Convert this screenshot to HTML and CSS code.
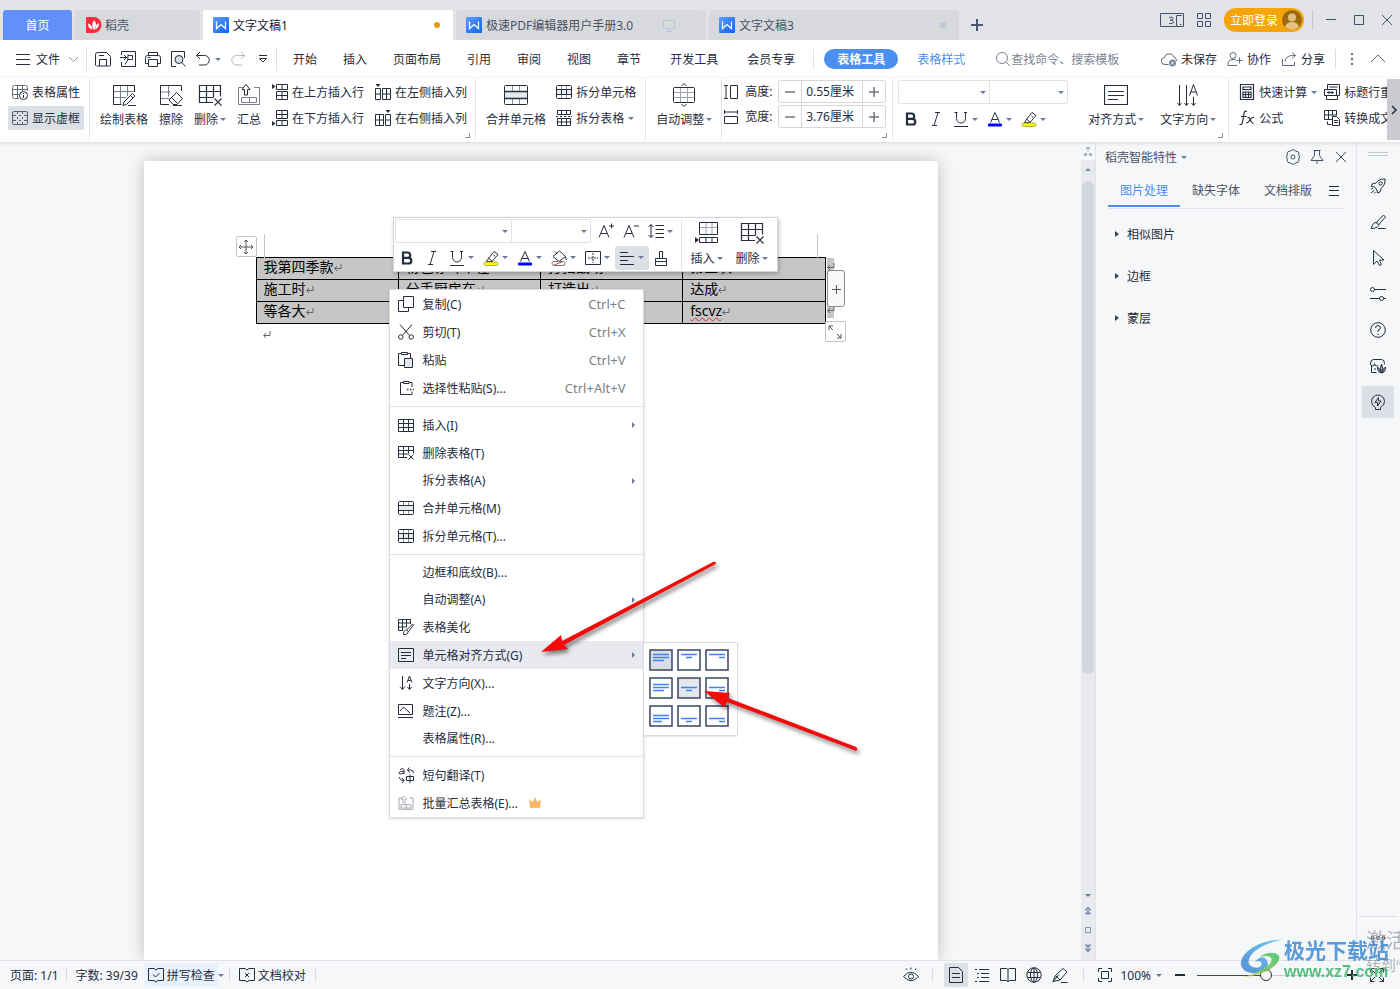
FILE: index.html
```html
<!DOCTYPE html>
<html lang="zh-CN">
<head>
<meta charset="utf-8">
<title>文字文稿1</title>
<link rel="stylesheet" href="styles.css">
</head>
<body>
<svg class="sprite" aria-hidden="true">
  <defs>
    <linearGradient id="wg" x1="0" y1="0" x2="1" y2="1"><stop offset="0" stop-color="#5e9bff"/><stop offset="1" stop-color="#0a66e8"/></linearGradient>
    <linearGradient id="lb" x1="1" y1="0" x2="0" y2="1"><stop offset="0" stop-color="#4fc3f7"/><stop offset="1" stop-color="#3f7fce"/></linearGradient>
    <linearGradient id="lg" x1="1" y1="0" x2="0" y2="1"><stop offset="0" stop-color="#3fbf6a"/><stop offset=".6" stop-color="#7cc653"/><stop offset="1" stop-color="#f2d24a"/></linearGradient>
  </defs>
  <symbol id="w" viewBox="0 0 16 16"><rect width="16" height="16" rx="1" fill="url(#wg)" stroke="none"/><path d="M3.500 4.500v7l4.500-4 4.500 4v-7" stroke="#fff" stroke-width="1.300"/></symbol>
  <symbol id="daoke" viewBox="0 0 16 16"><path d="M1 0h6.500a8 8 0 0 1 0 16H1q-1 0-1-1V1q0-1 1-1z" fill="#fb2c3c" stroke="none"/><path d="M8 3q4 5 0 10q-3.500-4 0-10zM2 6.500q4 1 4 6q-4-1-4-6zM13 6q-4 1.500-4.500 6.500q4.500-1 4.500-6.500z" fill="#fff" stroke="none"/></symbol>
  <symbol id="monitor" viewBox="0 0 16 16"><path d="M2.500 3.500h11v8h-11zM8 11.500v3M5 14.500h6"/></symbol>
  <symbol id="plus" viewBox="0 0 12 12"><path d="M6 0v12M0 6h12" stroke-width="2"/></symbol>
  <symbol id="burger" viewBox="0 0 16 16"><path d="M1 3.500h14M1 8.500h14M1 13.500h14"/></symbol>
  <symbol id="chev" viewBox="0 0 16 16"><path d="M4 6l4.500 4.500L13 6"/></symbol>
  <symbol id="save" viewBox="0 0 16 16"><path d="M.500 14.500V3.500q0-2 2-2h9l4 4v9q0 .500-1 .500H1.500M4.500 15V8.500h7V15M4 4.500h5"/></symbol>
  <symbol id="pdf" viewBox="0 0 16 16"><path d="M1.500 4V.500h14v15h-14V11M0 6.500h6.500M4 4l2.500 2.500L4 9M5 13.500q4-4 3-10M8 4.500h4.500v4H8"/></symbol>
  <symbol id="print" viewBox="0 0 16 16"><path d="M3.500 4.500v-3h9v3M3.500 12.500h-3v-6q0-2 2-2h11q2 0 2 2v6h-3M3.500 8.500h9v7h-9zM2.500 6.500h3"/></symbol>
  <symbol id="preview" viewBox="0 0 16 16"><path d="M6 15.500H1.500V.500h13V7"/><circle cx="9" cy="8.500" r="4" fill="#d9dce2"/><path d="M12 11.500l3.500 4"/></symbol>
  <symbol id="undo" viewBox="0 0 16 16"><path d="M5 1L1.500 4.500 5 8M1.500 4.500h8a4.700 4.700 0 0 1 0 9.500H4"/></symbol>
  <symbol id="redo" viewBox="0 0 16 16"><path d="M11 1l3.500 3.500L11 8M14.500 4.500h-8a4.700 4.700 0 0 0 0 9.500H12"/></symbol>
  <symbol id="more" viewBox="0 0 10 10"><path d="M1 1.500h8M1.500 4.500L5 8l3.500-3.500z"/></symbol>
  <symbol id="search" viewBox="0 0 16 16"><circle cx="7" cy="7" r="5.500"/><path d="M11 11l4 4"/></symbol>
  <symbol id="cloud" viewBox="0 0 16 16"><path d="M7.500 13.500H4a3.500 3.500 0 0 1-.500-7 5 5 0 0 1 9.500-.500 4 4 0 0 1 2.500 4"/><circle cx="11.500" cy="12" r="3.500" fill="#77839e" stroke="none"/><path d="M10 10.500l3 3M13 10.500l-3 3" stroke="#fff"/></symbol>
  <symbol id="collab" viewBox="0 0 16 16"><circle cx="6" cy="4.500" r="3"/><path d="M1 14.500q-.500-6 5-6 2 0 3 .500M1 14.500h9M12.500 6.500v6M9.500 9.500h6"/></symbol>
  <symbol id="share" viewBox="0 0 16 16"><path d="M1.500 8v6.500h12V11M4 10.500q1-6 7.500-6h3M11 1.500l3.500 3-3.500 3"/></symbol>
  <symbol id="tblprop" viewBox="0 0 16 16"><path d="M15.500 7V3.500q0-2-2-2h-11q-2 0-2 2v9q0 2 2 2H7M.500 5.500h15M.500 10.500h7M5.500 1.500v13M10.500 1.500V7" stroke="#636a7a"/><circle cx="11.500" cy="11.500" r="4" fill="#fff"/><path d="M11.500 11v3M11.500 9v1"/></symbol>
  <symbol id="tblframe" viewBox="0 0 16 16"><g stroke="#59606f"><rect x=".500" y="1.500" width="15" height="13" rx="1.500"/><path d="M1 5.500h3m3 0h2m3 0h3M1 10.500h3m3 0h2m3 0h3M5.500 2v2m0 3v2m0 3v2M10.500 2v2m0 3v2m0 3v2"/></g></symbol>
  <symbol id="draw" viewBox="0 0 24 24"><path d="M10 21.500H1.500v-19h21V9M1.500 8.500h20M1.500 14.500h13M8.500 2.500v19M15.500 2.500V13" stroke="#7a8090"/><path d="M1.500 21.500v-19h21V9M1.500 21.500H9M12 19l8.500-8.500 2.500 2.500-8.500 8.500-3.500 1zM18.500 12.500l2.500 2.500M16 22.500h8" /></symbol>
  <symbol id="erase" viewBox="0 0 24 24"><path d="M1.500 15.500h9M9.500 2.500v11M1.500 9h10" stroke="#7a8090"/><path d="M10 21.500H1.500v-19h21V8M10 17l7.500-7.500 6 6-5.500 6h-4zM12.500 14.500l6 6M14 22.500h9"/></symbol>
  <symbol id="del" viewBox="0 0 24 24"><path d="M15 19.500H1.500v-17h21v11M1.500 8.500h21M1.500 14.500h14M8.500 2.500v17M15.500 2.500v12M16.500 15.500l7 7M23.500 15.500l-7 7" stroke-width="1.200"/></symbol>
  <symbol id="sum" viewBox="0 0 24 24"><path d="M7 4.500H1.500v17h21v-17H17M4.500 14.500h15v5h-15zM12.500 14.500v5" stroke="#7a8090"/><path d="M7.500 12V6.500H5l4-5 4 5h-2.500V12z"/></symbol>
  <symbol id="rowup" viewBox="0 0 16 16"><path d="M0 0l3.500 2.500L0 5z" fill="currentColor" stroke="none"/><path d="M4.500 .500h11v5h-11zM10 .500v5M4.500 7.500h11v8h-11zM4.500 11.500h11M10 7.500v8"/></symbol>
  <symbol id="rowdn" viewBox="0 0 16 16"><path d="M0 11l3.500 2.500L0 16z" fill="currentColor" stroke="none"/><path d="M4.500 10.500h11v5h-11zM10 10.500v5M4.500 .500h11v8h-11zM4.500 4.500h11M10 .500v8"/></symbol>
  <symbol id="colL" viewBox="0 0 16 16"><path d="M.500 0h5L3 3z" fill="currentColor" stroke="none"/><path d="M.500 4.500h5v11h-5zM.500 10h5M7.500 4.500h8v11h-8zM11.500 4.500v11M7.500 10h8"/></symbol>
  <symbol id="colR" viewBox="0 0 16 16"><path d="M10.500 0h5L13 3z" fill="currentColor" stroke="none"/><path d="M10.500 4.500h5v11h-5zM10.500 10h5M.500 4.500h8v11h-8zM4.500 4.500v11M.500 10h8"/></symbol>
  <symbol id="merge" viewBox="0 0 24 24"><path d="M.500 8.500h23v7H.500z" fill="#e6e8ec" stroke="none"/><path d="M8.500 2.500v5M15.500 2.500v5M8.500 16v5M15.500 16v5" stroke="#8b909c"/><rect x=".500" y="2.500" width="23" height="19" rx="1"/><path d="M.500 8.500h23M.500 15.500h23" stroke-width="1.300"/></symbol>
  <symbol id="merge16" viewBox="0 0 16 16"><path d="M5.500 1.500v4M10.500 1.500v4M5.500 10.500v4M10.500 10.500v4" stroke="#8b909c"/><path d="M.500 5.500h15v5H.500z" fill="#e6e8ec"/><rect x=".500" y="1.500" width="15" height="13" rx="1"/></symbol>
  <symbol id="split16" viewBox="0 0 16 16"><path d="M5.500 1.500v4M10.500 1.500v4M5.500 10.500v4M10.500 10.500v4" stroke="#8b909c"/><path d="M.500 5.500h15v5H.500z" fill="#e6e8ec"/><path d="M5.500 5.500v5M10.500 5.500v5"/><rect x=".500" y="1.500" width="15" height="13" rx="1"/></symbol>
  <symbol id="splittbl" viewBox="0 0 16 16"><path d="M1.500 4.500v-4h13v4zM5.500 .500v4M10.500 .500v4M0 6.500h2m2 0h2m2 0h2m2 0h2m1 0h1M1.500 8.500h13v7h-13zM1.500 12h13M5.500 8.500v7M10.500 8.500v7"/></symbol>
  <symbol id="autofit" viewBox="0 0 24 24"><path d="M1.500 9.500h21M1.500 14.500h21M8.500 4.500v15M15.500 4.500v15" stroke="#a0a4ae"/><rect x="1.500" y="4.500" width="21" height="15" rx="1"/><path d="M9.500 3L12 .500 14.500 3M9.500 21l2.500 2.500 2.500-2.500"/></symbol>
  <symbol id="hgt" viewBox="0 0 16 16"><path d="M0 1.500h4M0 14.500h4M2 1.500v13M6.500 1.500h7v13h-7z"/></symbol>
  <symbol id="wid" viewBox="0 0 16 16"><path d="M.500 1v4M13.500 1v4M.500 3h13M.500 7.500h13v7H.500z"/></symbol>
  <symbol id="bold" viewBox="0 0 16 16"><path d="M4 2.500h4.500a2.700 2.700 0 0 1 0 5.400H4zM4 7.900h5.500a2.800 2.800 0 0 1 0 5.600H4z" stroke-width="2.200"/></symbol>
  <symbol id="ital" viewBox="0 0 16 16"><path d="M7 1.500h5M4 14.500h5M10 1.500l-4 13"/></symbol>
  <symbol id="undl" viewBox="0 0 16 16"><path d="M3.500 1v6.500a4.500 4.500 0 0 0 9 0V1M1.500 1.500h3M11 1.500h3M1 15.500h14"/></symbol>
  <symbol id="fcol" viewBox="0 0 16 16"><path d="M3.500 11.500L8 1.500l4.500 10M5 8.500h6"/><rect x="1" y="12.500" width="14" height="3" rx="1" fill="#00f" stroke="none"/></symbol>
  <symbol id="hili" viewBox="0 0 16 16"><path d="M5 9l6-7.500 4 3L9 11.500H3.500zM5.500 8l4 3.500M10.500 5l1.500 1.200"/><rect x="1" y="12" width="14" height="3.500" rx="1.700" fill="#ff0" stroke="#8c8a3a" stroke-width=".700"/></symbol>
  <symbol id="shade" viewBox="0 0 16 16"><path d="M2 6.500L8.500 1l6 5.500L8 11.500zM6 3.500l-2-2M14.500 7l1 3"/><rect x="1" y="11.500" width="13" height="4" rx="2" fill="#fff" stroke="#777"/><path d="M3 15l8-3" stroke="#e04040"/></symbol>
  <symbol id="bord" viewBox="0 0 16 16"><path d="M.500 1.500h15v13H.500z"/><path d="M8 3v10M3 8h10" stroke-dasharray="2 1"/></symbol>
  <symbol id="align" viewBox="0 0 16 16"><path d="M1 2.500h8M1 6.500h14M1 10.500h8M1 14.500h14"/></symbol>
  <symbol id="brush" viewBox="0 0 16 16"><path d="M6.500 8.500v-7h3v7M2.500 11.500v-3h11v3M2.500 11.500h11v4h-11z"/></symbol>
  <symbol id="Aup" viewBox="0 0 16 16"><path d="M1 14.500L6 2.500l5 12M3 10.500h6M11 3h5M13.500 .500v5"/></symbol>
  <symbol id="Adn" viewBox="0 0 16 16"><path d="M1 14.500L6 2.500l5 12M3 10.500h6M11 3h5"/></symbol>
  <symbol id="lsp" viewBox="0 0 16 16"><path d="M3 1.500v13M.500 4L3 1.500 5.500 4M.500 12L3 14.500 5.500 12M7.500 2.500H16M7.500 6.500H16M7.500 10.500H16M7.500 14.500H16"/></symbol>
  <symbol id="insrow" viewBox="0 0 24 24"><path d="M4.500 6.500h18M11 1.500v12M17 1.500v12" stroke="#a0a4ae"/><path d="M4.500 13.500v-12h18v12zM4.500 16.500h18v5h-18zM11 16.500v5M17 16.500v5"/><path d="M0 16l4 3-4 3z" fill="currentColor" stroke="none"/></symbol>
  <symbol id="alignbox" viewBox="0 0 24 24"><path d="M.500 2.500h23v19H.500zM4 8.500h16M4 12.500h16M4 16.500h10" stroke-width="1.200"/></symbol>
  <symbol id="alignbox16" viewBox="0 0 16 16"><path d="M.500 1.500h15v13H.500zM3 5.500h10M3 8.500h10M3 11.500h5"/></symbol>
  <symbol id="dir" viewBox="0 0 24 24"><path d="M3.500 2v20M10.500 2v20M17.500 14v8M1.500 20l2 2.500 2-2.500M8.500 20l2 2.500 2-2.500M15.500 20l2 2.500 2-2.500M13.500 12.500l4-11 4 11M15 9h5"/></symbol>
  <symbol id="dir16" viewBox="0 0 16 16"><path d="M4.500 1v13M2 11.500l2.500 3 2.500-3M11.500 9v5M9.500 12l2 2.500 2-2.500M9 7.500l2.500-6.500L14 7.500M10 5.500h3"/></symbol>
  <symbol id="calc" viewBox="0 0 16 16"><path d="M1.500 .500h13v15h-13zM4 3h8v2.500H4zM4 8h8v5.500H4zM6.500 8v5.500M9.500 8v5.500M4 10.500h8" stroke-width="1.200"/></symbol>
  <symbol id="fx" viewBox="0 0 16 16"><path d="M8 1.500q-2.500-1.500-3 2L3.500 12q-.500 3-3 2.500M2 6.500h5.500M8.500 7.500q1.500-1 2.500 2t3.500 4M15 7q-2 0-4 3t-4 3" stroke-width="1.200"/></symbol>
  <symbol id="title" viewBox="0 0 16 16"><path d="M3.500 5V.500h12v11h-3M5.500 3h8M.500 5.500h12v6H.500zM3 8.500h7M5 7v3M8 7v3M2.500 11.500v4h11v-4"/></symbol>
  <symbol id="conv" viewBox="0 0 16 16"><path d="M8.500 9.500H.500v-9h12v5M.500 5h12M4.500 .500v9M8.500 .500v5M8.500 6.500h4l3 3v6h-7zM10 10.500h4M10 12.500h4M3.500 11.500v3h4"/></symbol>
  <symbol id="copy" viewBox="0 0 16 16"><path d="M5.500 .500h10v11h-10zM5.500 4.500h-5v11h10v-4"/></symbol>
  <symbol id="cut" viewBox="0 0 16 16"><path d="M2 .500l9.500 11M14 .500l-9.500 11"/><circle cx="2.800" cy="13" r="2.200"/><circle cx="13.200" cy="13" r="2.200"/></symbol>
  <symbol id="paste" viewBox="0 0 16 16"><path d="M6 13.500H.500v-12h3M9 1.500h3.500V6M3.500 .500h6v2h-6z"/><path d="M6.500 6.500h8v9h-8z" fill="#e6e8ec"/></symbol>
  <symbol id="pastes" viewBox="0 0 16 16"><path d="M5.500 2.500h-3v12h11.500v-3M11 2.500h3V7M5.500 1.500h5.500v2H5.500z"/><path d="M9 9.500h1.500m1.500 0h1.500m1.500 0H16" stroke-width="1.500"/></symbol>
  <symbol id="tbl16" viewBox="0 0 16 16"><path d="M.500 2.500h15v12H.500zM.500 6.500h15M.500 10.500h15M5.500 2.500v12M10.500 2.500v12"/></symbol>
  <symbol id="del16" viewBox="0 0 16 16"><path d="M9 12.500H.500v-11h15v7M.500 5.500h15M.500 9h10M5.500 1.500v11M10.500 1.500v7M10.500 9.500l5 5M15.500 9.500l-5 5"/></symbol>
  <symbol id="beauty" viewBox="0 0 16 16"><path d="M5 11.500H.500v-11h12V5M.500 4h12M.500 8h8M4.500 .500v11M8.500 .500V8M8.500 11l6-6 1 1-5 6.500"/><path d="M5.500 15.500q0-4.500 3-4.500 3 1 1 3.500-1.500 1.500-4 1z"/></symbol>
  <symbol id="caption" viewBox="0 0 16 16"><path d="M.500 1.500h14v10H.500zM0 14.500h15M2 8l3.500-4L12 10"/></symbol>
  <symbol id="trans" viewBox="0 0 16 16"><path d="M2 2.500q4-2 4 1V7M6 4.500q-5-.500-5 1.500t5 0M9.500 3h3q3 0 3 3M11.500 .500L9.500 3l2 2.500M1.500 10q0 3.500 4.500 3.500M4 11l2 2.500-2 2.500M8.500 9.500h7v4h-7zM12 7.500V16"/></symbol>
  <symbol id="crown" viewBox="0 0 16 16"><path d="M2 4l3.500 3L8 2l2.500 5L14 4l-1 9H3z" fill="#fdb968" stroke="none"/></symbol>
  <symbol id="gear" viewBox="0 0 16 16"><path d="M6.200 1.500Q8-.300 9.800 1.500l1.200.700q2.600-.200 3 2.300l-.400 1.500q2 2 0 4l.400 1.500q-.400 2.500-3 2.300l-1.200.700Q8 16.300 6.200 14.500L5 13.800q-2.600.200-3-2.300L2.400 10q-2-2 0-4L2 4.500q.400-2.500 3-2.300z" stroke-linejoin="round"/><circle cx="8" cy="8" r="2"/></symbol>
  <symbol id="pin" viewBox="0 0 16 16"><path d="M4.500 1.500h7M5.500 1.500v5L2 11.500h12l-3.500-5v-5M8 11.500V15"/></symbol>
  <symbol id="x" viewBox="0 0 16 16"><path d="M3 3l10 10M13 3L3 13"/></symbol>
  <symbol id="rocket" viewBox="0 0 16 16"><path d="M15 1q-6-.500-9 4L2 6 1.500 8.500l3 .500L7 12l.500 3 2.500-1 1-3.500q4.500-3.500 4-9.500zM1 11.500l2-1.500M1 15l3.500-3M4 15.500l1.500-1.500"/><circle cx="10.500" cy="5.500" r="1.700"/></symbol>
  <symbol id="pen" viewBox="0 0 16 16"><path d="M6 9l7.500-8 2 2-7 8M1 14.500q1.500-5 4-6 3.500 0 3.500 3-1.500 3-7.500 3zM8 14.500h7.500"/></symbol>
  <symbol id="write" viewBox="0 0 16 16"><path d="M1 14.500l2.500-6L11 1.500l4 3.500-7 8zM3.500 8.500l4.500 4.500M1 14.500l6-7M9 15.500h6.500"/></symbol>
  <symbol id="cursor" viewBox="0 0 16 16"><path d="M3.500 .500v14l3.500-3.500 2.500 4.500 2-1-2-4.500h4.500z"/></symbol>
  <symbol id="sliders" viewBox="0 0 16 16"><circle cx="2.500" cy="3.500" r="2"/><circle cx="11.500" cy="12.500" r="2"/><path d="M4.500 3.500H16M0 12.500h9.500M13.500 12.500H16"/></symbol>
  <symbol id="help" viewBox="0 0 16 16"><circle cx="8" cy="8" r="7.300"/><path d="M5.500 6q0-2.500 2.500-2.500T10.500 6Q10.500 7.500 8 8.500V10M8 11.500V13"/></symbol>
  <symbol id="shop" viewBox="0 0 16 16"><path d="M6.500 14.500h-5V8M.500 5.500q0-4 3-4h8q3 0 3 4v1M.500 5.500q0 2.500 2 2.500t2-2.500q0 2.500 2 2.500T8 7M4 11h2"/><path d="M11.500 6q2.500 4 0 9-2.500-4 0-9zM7.500 9q3 1.500 3 6-3.500-1.500-3-6zM15.500 9q-3 1.500-3 6 3.500-1.500 3-6z" fill="#aab"/></symbol>
  <symbol id="bulb" viewBox="0 0 16 16"><path d="M5.500 13.500Q1.500 11.500 1.500 7.500a6.500 6.500 0 0 1 13 0q0 4-4 6v2h-5zM8.500 3.500L5 8.500h2.500v3.500L11 7H8.500z"/></symbol>
  <symbol id="spell" viewBox="0 0 16 16"><path d="M6 1.500H.500v12H6l2 1.500 2-1.500h5.500v-12H10L8 3zM5 7.500l2.500 2.500 4-4"/></symbol>
  <symbol id="proof" viewBox="0 0 16 16"><path d="M6 1.500H.500v12H6l2 1.500 2-1.500h5.500v-12H10L8 3zM6 6l4 4M10 6l-4 4"/></symbol>
  <symbol id="eye" viewBox="0 0 16 16"><path d="M.500 9.500q7.500-8.500 15 0-7.500 8.500-15 0zM8 .500v2M3 1.500L4 3M13 1.500L12 3"/><circle cx="8" cy="9.500" r="2.500"/></symbol>
  <symbol id="doc" viewBox="0 0 16 16"><path d="M1.500 .500h9l4 4v11h-13zM4 6.500h8M4 10.500h8"/></symbol>
  <symbol id="list" viewBox="0 0 16 16"><path d="M1 2.500h2M5 2.500h10M3 6.500h2M7 6.500h8M3 10.500h2M7 10.500h8M1 14.500h2M5 14.500h10"/></symbol>
  <symbol id="book" viewBox="0 0 16 16"><path d="M8 2.500L6.500 1.500H.500v12h6L8 15l1.500-1.500h6v-12h-6zM8 2.500V14"/></symbol>
  <symbol id="globe" viewBox="0 0 16 16"><circle cx="8" cy="8" r="7.200"/><ellipse cx="8" cy="8" rx="3.500" ry="7.200"/><path d="M1.500 5.500h13M1.500 10.500h13M8 1v14"/></symbol>
  <symbol id="fit" viewBox="0 0 16 16"><path d="M1.500 5V1.500H5M11 1.500h3.500V5M14.500 11v3.500H11M5 14.500H1.500V11M4.500 4.500h7v7h-7z"/></symbol>
  <symbol id="full" viewBox="0 0 16 16"><path d="M1.500 5.500v-4h4M10.500 1.500h4v4M14.500 10.500v4h-4M5.500 14.500h-4v-4M1.500 1.500l4.500 4.500M14.500 1.500L10 6M14.500 14.500L10 10M1.500 14.500L6 10"/></symbol>
  <symbol id="ret" viewBox="0 0 8 8"><path d="M7 0v4.500H1M3 2L.700 4.500 3 7"/></symbol>
  <symbol id="move" viewBox="0 0 16 16"><path d="M8 1v14M1 8h14M6 3l2-2 2 2M6 13l2 2 2-2M3 6L1 8l2 2M13 6l2 2-2 2"/></symbol>
  <symbol id="resize" viewBox="0 0 16 16"><path d="M2 6V2h4M2 2l4 4M14 10v4h-4M14 14l-4-4"/></symbol>
</svg>

<header class="tabbar">
  <button class="tab home">首页</button>
  <button class="tab store"><svg class="i16"><use href="#daoke"/></svg>稻壳</button>
  <button class="tab file current"><svg class="i16"><use href="#w"/></svg><span class="name">文字文稿1</span><i class="dot"></i></button>
  <button class="tab file"><svg class="i16"><use href="#w"/></svg><span class="name">极速PDF编辑器用户手册3.0</span><svg class="i16 faint"><use href="#monitor"/></svg></button>
  <button class="tab file"><svg class="i16"><use href="#w"/></svg><span class="name">文字文稿3</span><i class="dot"></i></button>
  <button class="newtab" aria-label="新建"><svg class="i12"><use href="#plus"/></svg></button>
  <div class="winctl">
    <button aria-label="窗口"><svg class="i24" viewBox="0 0 24 16"><path d="M.500 1.500h23v13H.500zM21.500 4V3.500h-5v10h1M20 12.500h1.500M9 5.500q4-1.500 4 1t-3 1.500q3.500 0 3.500 2t-4.500 1.500"/></svg></button>
    <button aria-label="应用"><svg class="i16" viewBox="0 0 16 16"><path d="M1.500 1.500h5v5h-5zM9.500 1.500h5v5h-5zM1.500 9.500h5v5h-5zM9.500 9.500h5v5h-5z"/></svg></button>
    <button class="login">立即登录<svg class="avatar" viewBox="0 0 20 20"><circle cx="10" cy="10" r="10" fill="#9a6a0c"/><circle cx="10" cy="7.500" r="4" fill="#e3bf80"/><path d="M3 17q1-5 7-5t7 5q-7 6-14 0z" fill="#e3bf80"/></svg></button>
    <i class="vline"></i>
    <button aria-label="最小化"><svg class="i12" viewBox="0 0 12 12"><path d="M1 5.500h10"/></svg></button>
    <button aria-label="最大化"><svg class="i12" viewBox="0 0 12 12"><path d="M1.500 1.500h9v9h-9z"/></svg></button>
    <button aria-label="关闭"><svg class="i12" viewBox="0 0 12 12"><path d="M1 1l10 10M11 1L1 11"/></svg></button>
  </div>
</header>

<div class="menubar">
  <button class="filemenu"><svg class="i16"><use href="#burger"/></svg>文件<svg class="i16 grey"><use href="#chev"/></svg></button>
  <div class="quick">
    <button aria-label="保存"><svg class="i16"><use href="#save"/></svg></button>
    <button aria-label="输出为PDF"><svg class="i16"><use href="#pdf"/></svg></button>
    <button aria-label="打印"><svg class="i16"><use href="#print"/></svg></button>
    <button aria-label="打印预览"><svg class="i16"><use href="#preview"/></svg></button>
    <button aria-label="撤销"><svg class="i16"><use href="#undo"/></svg><i class="tri"></i></button>
    <button aria-label="恢复" class="off"><svg class="i16"><use href="#redo"/></svg></button>
    <button aria-label="更多"><svg class="i10"><use href="#more"/></svg></button>
  </div>
  <nav class="nav"><button>开始</button><button>插入</button><button>页面布局</button><button>引用</button><button>审阅</button><button>视图</button><button>章节</button></nav>
  <nav class="nav extra"><button>开发工具</button><button>会员专享</button></nav>
  <nav class="nav tools"><button class="pill">表格工具</button><button class="blue">表格样式</button></nav>
  <label class="search"><svg class="i16"><use href="#search"/></svg><input type="text" placeholder="查找命令、搜索模板" aria-label="查找命令"></label>
  <div class="account">
    <button><svg class="i16"><use href="#cloud"/></svg>未保存</button>
    <button><svg class="i16"><use href="#collab"/></svg>协作</button>
    <button><svg class="i16"><use href="#share"/></svg>分享</button>
    <i class="vline"></i>
    <button aria-label="更多"><svg class="i16" viewBox="0 0 16 16"><path d="M8 2v2M8 7v2M8 12v2" stroke-width="2"/></svg></button>
    <button aria-label="收起功能区"><svg class="i16" viewBox="0 0 16 16"><path d="M1 11l7-7 7 7"/></svg></button>
  </div>
</div>

<div class="ribbon">
  <div class="groups">
    <div class="group g1">
      <div class="stack"><button><svg class="i16"><use href="#tblprop"/></svg>表格属性</button><button class="on"><svg class="i16"><use href="#tblframe"/></svg>显示虚框</button></div>
    </div>
    <div class="group g2">
      <button class="big"><svg class="i24s"><use href="#draw"/></svg><span>绘制表格</span></button>
      <button class="big"><svg class="i24s"><use href="#erase"/></svg><span>擦除</span></button>
      <button class="big"><svg class="i24s"><use href="#del"/></svg><span>删除<i class="tri"></i></span></button>
      <button class="big"><svg class="i24s"><use href="#sum"/></svg><span>汇总</span></button>
      <div class="stack"><button><svg class="i16"><use href="#rowup"/></svg>在上方插入行</button><button><svg class="i16"><use href="#rowdn"/></svg>在下方插入行</button></div>
      <div class="stack"><button><svg class="i16"><use href="#colL"/></svg>在左侧插入列</button><button><svg class="i16"><use href="#colR"/></svg>在右侧插入列</button></div>
      <i class="corner"></i>
    </div>
    <div class="group g3">
      <button class="big"><svg class="i24s"><use href="#merge"/></svg><span>合并单元格</span></button>
      <div class="stack"><button><svg class="i16"><use href="#split16"/></svg>拆分单元格</button><button><svg class="i16"><use href="#splittbl"/></svg>拆分表格<i class="tri"></i></button></div>
    </div>
    <div class="group g3"><button class="big"><svg class="i24s"><use href="#autofit"/></svg><span>自动调整<i class="tri"></i></span></button></div>
    <div class="group g5">
      <div class="sizes">
        <div class="size"><svg class="i16"><use href="#hgt"/></svg><label for="rh">高度:</label><div class="spin"><button aria-label="减小高度"><svg class="i10" viewBox="0 0 10 10"><path d="M0 5h10" stroke-width="1.500"/></svg></button><input id="rh" type="text" value="0.55厘米"><button aria-label="增大高度"><svg class="i10" viewBox="0 0 10 10"><path d="M0 5h10M5 0v10" stroke-width="1.500"/></svg></button></div></div>
        <div class="size"><svg class="i16"><use href="#wid"/></svg><label for="cw">宽度:</label><div class="spin"><button aria-label="减小宽度"><svg class="i10" viewBox="0 0 10 10"><path d="M0 5h10" stroke-width="1.500"/></svg></button><input id="cw" type="text" value="3.76厘米"><button aria-label="增大宽度"><svg class="i10" viewBox="0 0 10 10"><path d="M0 5h10M5 0v10" stroke-width="1.500"/></svg></button></div></div>
      </div>
      <i class="corner"></i>
    </div>
    <div class="group g6">
      <div class="font">
        <div class="combos"><span class="combo wide"><select aria-label="字体"><option></option></select><i class="tri"></i></span><span class="combo"><select aria-label="字号"><option></option></select><i class="tri"></i></span></div>
        <div class="fmt"><button aria-label="加粗"><svg class="i16"><use href="#bold"/></svg></button><button aria-label="倾斜"><svg class="i16"><use href="#ital"/></svg></button><button class="dd" aria-label="下划线"><svg class="i16"><use href="#undl"/></svg><i class="tri"></i></button><button class="dd" aria-label="字体颜色"><svg class="i16"><use href="#fcol"/></svg><i class="tri"></i></button><button class="dd" aria-label="突出显示"><svg class="i16"><use href="#hili"/></svg><i class="tri"></i></button></div>
      </div>
      <button class="big"><svg class="i24s"><use href="#alignbox"/></svg><span>对齐方式<i class="tri"></i></span></button>
      <button class="big"><svg class="i24s"><use href="#dir"/></svg><span>文字方向<i class="tri"></i></span></button>
      <i class="corner"></i>
    </div>
    <div class="group g7">
      <div class="stack"><button><svg class="i16"><use href="#calc"/></svg>快速计算<i class="tri"></i></button><button><svg class="i16"><use href="#fx"/></svg>公式</button></div>
      <div class="stack"><button><svg class="i16"><use href="#title"/></svg>标题行重复</button><button><svg class="i16"><use href="#conv"/></svg>转换成文本</button></div>
    </div>
  </div>
  <button class="scrollbtn" aria-label="向右滚动"><svg class="i10" viewBox="0 0 10 10"><path d="M3 1l4 4-4 4" stroke-width="1.500"/></svg></button>
</div>

<div class="main">
  <div class="canvas">
    <article class="page">
      <table class="doc">
        <tr><td>我第四季款<svg class="ret"><use href="#ret"/></svg></td><td>粉色赤峰市在<svg class="ret"><use href="#ret"/></svg></td><td>打扫战场<svg class="ret"><use href="#ret"/></svg></td><td>第三次<svg class="ret"><use href="#ret"/></svg></td></tr>
        <tr><td>施工时<svg class="ret"><use href="#ret"/></svg></td><td>分手厨房在<svg class="ret"><use href="#ret"/></svg></td><td>打造出<svg class="ret"><use href="#ret"/></svg></td><td>达成<svg class="ret"><use href="#ret"/></svg></td></tr>
        <tr><td>等各大<svg class="ret"><use href="#ret"/></svg></td><td></td><td></td><td><span class="typo">fscvz</span><svg class="ret"><use href="#ret"/></svg></td></tr>
      </table>
      <p class="after"><svg class="ret"><use href="#ret"/></svg></p>
      <i class="crop cl"></i><i class="crop cr"></i>
      <div class="rowends"><svg class="ret"><use href="#ret"/></svg><svg class="ret"><use href="#ret"/></svg></div>
      <button class="handle move" aria-label="移动表格"><svg class="i16"><use href="#move"/></svg></button>
      <button class="handle addcol" aria-label="添加列"><svg class="i10" viewBox="0 0 10 10"><path d="M5.500 1v9M1 5.500h9"/></svg></button>
      <button class="handle resize" aria-label="调整大小"><svg class="i16"><use href="#resize"/></svg></button>

      <div class="mini">
        <div class="minileft">
          <div class="fmt top"><div class="combos"><span class="combo wide"><select aria-label="字体"><option></option></select><i class="tri"></i></span><span class="combo"><select aria-label="字号"><option></option></select><i class="tri"></i></span></div><button aria-label="增大字号"><svg class="i16"><use href="#Aup"/></svg></button><button aria-label="减小字号"><svg class="i16"><use href="#Adn"/></svg></button><button class="dd" aria-label="行距"><svg class="i16"><use href="#lsp"/></svg><i class="tri"></i></button></div>
          <div class="fmt"><button aria-label="加粗"><svg class="i16"><use href="#bold"/></svg></button><button aria-label="倾斜"><svg class="i16"><use href="#ital"/></svg></button><button class="dd" aria-label="下划线"><svg class="i16"><use href="#undl"/></svg><i class="tri"></i></button><button class="dd" aria-label="突出显示"><svg class="i16"><use href="#hili"/></svg><i class="tri"></i></button><button class="dd" aria-label="字体颜色"><svg class="i16"><use href="#fcol"/></svg><i class="tri"></i></button><button class="dd" aria-label="底纹"><svg class="i16"><use href="#shade"/></svg><i class="tri"></i></button><button class="dd" aria-label="边框"><svg class="i16"><use href="#bord"/></svg><i class="tri"></i></button><button class="dd on" aria-label="对齐"><svg class="i16"><use href="#align"/></svg><i class="tri"></i></button><button aria-label="格式刷"><svg class="i16"><use href="#brush"/></svg></button></div>
        </div>
        <div class="miniright">
          <button class="big"><svg class="i24s"><use href="#insrow"/></svg><span>插入<i class="tri"></i></span></button>
          <button class="big"><svg class="i24s"><use href="#del"/></svg><span>删除<i class="tri"></i></span></button>
        </div>
      </div>

      <div class="ctx">
        <button><svg class="i16"><use href="#copy"/></svg>复制(C)<kbd>Ctrl+C</kbd></button>
        <button><svg class="i16"><use href="#cut"/></svg>剪切(T)<kbd>Ctrl+X</kbd></button>
        <button><svg class="i16"><use href="#paste"/></svg>粘贴<kbd>Ctrl+V</kbd></button>
        <button><svg class="i16"><use href="#pastes"/></svg>选择性粘贴(S)...<kbd>Ctrl+Alt+V</kbd></button>
        <hr>
        <button class="sub"><svg class="i16"><use href="#tbl16"/></svg>插入(I)</button>
        <button><svg class="i16"><use href="#del16"/></svg>删除表格(T)</button>
        <button class="plain sub">拆分表格(A)</button>
        <button><svg class="i16"><use href="#merge16"/></svg>合并单元格(M)</button>
        <button><svg class="i16"><use href="#split16"/></svg>拆分单元格(T)...</button>
        <hr>
        <button class="plain">边框和底纹(B)...</button>
        <button class="plain sub">自动调整(A)</button>
        <button><svg class="i16"><use href="#beauty"/></svg>表格美化</button>
        <button class="hover sub"><svg class="i16"><use href="#alignbox16"/></svg>单元格对齐方式(G)</button>
        <button><svg class="i16"><use href="#dir16"/></svg>文字方向(X)...</button>
        <button><svg class="i16"><use href="#caption"/></svg>题注(Z)...</button>
        <button class="plain">表格属性(R)...</button>
        <hr>
        <button><svg class="i16"><use href="#trans"/></svg>短句翻译(T)</button>
        <button><svg class="i16 fade"><use href="#sum"/></svg>批量汇总表格(E)...<svg class="i16"><use href="#crown"/></svg></button>
      </div>

      <div class="aligns">
        <button class="on" aria-label="靠上左对齐"><svg viewBox="0 0 24 22"><path class="b" d="M1 1h22v20H1z"/><path d="M4 5.500h16M4 8.500h16M4 11.500h11"/></svg></button>
        <button aria-label="靠上居中"><svg viewBox="0 0 24 22"><path class="b" d="M1 1h22v20H1z"/><path d="M4 5.500h16M9 8.500h6"/></svg></button>
        <button aria-label="靠上右对齐"><svg viewBox="0 0 24 22"><path class="b" d="M1 1h22v20H1z"/><path d="M4 5.500h16M14 8.500h6"/></svg></button>
        <button aria-label="中部左对齐"><svg viewBox="0 0 24 22"><path class="b" d="M1 1h22v20H1z"/><path d="M4 7.500h16M4 10.500h16M4 13.500h11"/></svg></button>
        <button class="pick" aria-label="水平居中"><svg viewBox="0 0 24 22"><path class="b" d="M1 1h22v20H1z"/><path d="M4 10.500h16M9 13.500h6"/></svg></button>
        <button aria-label="中部右对齐"><svg viewBox="0 0 24 22"><path class="b" d="M1 1h22v20H1z"/><path d="M4 10.500h16M14 13.500h6"/></svg></button>
        <button aria-label="靠下左对齐"><svg viewBox="0 0 24 22"><path class="b" d="M1 1h22v20H1z"/><path d="M4 10.500h16M4 13.500h16M4 16.500h9"/></svg></button>
        <button aria-label="靠下居中"><svg viewBox="0 0 24 22"><path class="b" d="M1 1h22v20H1z"/><path d="M4 13.500h16M9 16.500h6"/></svg></button>
        <button aria-label="靠下右对齐"><svg viewBox="0 0 24 22"><path class="b" d="M1 1h22v20H1z"/><path d="M4 13.500h16M14 16.500h6"/></svg></button>
      </div>
      <svg class="arrows" viewBox="0 0 330 200">
        <g fill="#f50a0a" stroke="none"><path d="M1 92L21 75 22 81 173 2q3-1 3 1-1 2-2 2L24 85l4 4z"/><path d="M164 131l26 2-2 5 128 49q2 2 1 3-2 1-3 0L187 142l-3 5z"/></g>
      </svg>
    </article>
  </div>

  <div class="vscroll">
    <div class="ruler"><svg class="i10" viewBox="0 0 10 10"><path d="M3 0h4v2H3zM4.500 2h1v3h-1zM1 6h3v3H1zM6 6h3v3H6z" fill="#aab2c6" stroke="none"/></svg></div>
    <div class="track"><i class="tri up"></i><i class="thumb"></i><i class="tri"></i><svg class="i10" viewBox="0 0 10 10"><path d="M2 4l3-3 3 3zM2 8l3-3 3 3z" fill="currentColor"/></svg><svg class="i10" viewBox="0 0 10 10"><rect x="2.500" y="2.500" width="5" height="5"/></svg><svg class="i10" viewBox="0 0 10 10"><path d="M2 1l3 3 3-3zM2 5l3 3 3-3z" fill="currentColor"/></svg></div>
  </div>

  <aside class="panel">
    <div class="phead"><button class="ptitle">稻壳智能特性<i class="tri"></i></button><button aria-label="设置"><svg class="i16"><use href="#gear"/></svg></button><button aria-label="固定"><svg class="i16"><use href="#pin"/></svg></button><button aria-label="关闭"><svg class="i16"><use href="#x"/></svg></button></div>
    <div class="ptabs"><button class="sel">图片处理</button><button>缺失字体</button><button>文档排版</button><button class="pm" aria-label="菜单"><svg class="i12" viewBox="0 0 12 12"><path d="M1 1.500h10M1 5.500h10M1 10.500h10"/></svg></button></div>
    <div class="plist"><button>相似图片</button><button>边框</button><button>蒙层</button></div>
  </aside>

  <nav class="side">
    <i class="grip"></i>
    <button aria-label="加速"><svg class="i16"><use href="#rocket"/></svg></button>
    <button aria-label="样式"><svg class="i16"><use href="#pen"/></svg></button>
    <button aria-label="选择"><svg class="i16"><use href="#cursor"/></svg></button>
    <button aria-label="属性"><svg class="i16"><use href="#sliders"/></svg></button>
    <button aria-label="帮助"><svg class="i16"><use href="#help"/></svg></button>
    <button aria-label="素材"><svg class="i16"><use href="#shop"/></svg></button>
    <button class="on" aria-label="智能特性"><svg class="i16"><use href="#bulb"/></svg></button>
    <button class="last" aria-label="更多"><svg class="i16" viewBox="0 0 16 16"><circle cx="2.500" cy="8" r="1.500"/><circle cx="8" cy="8" r="1.500"/><circle cx="13.500" cy="8" r="1.500"/></svg></button>
  </nav>
</div>

<footer class="status">
  <span class="cell">页面: 1/1</span><i class="vline"></i><span class="cell">字数: 39/39</span>
  <button class="spell"><svg class="i16"><use href="#spell"/></svg>拼写检查</button><i class="tri"></i><i class="vline gap"></i>
  <button class="proof"><svg class="i16"><use href="#proof"/></svg>文档校对</button><i class="vline"></i>
  <div class="views">
    <button aria-label="护眼模式"><svg class="i16"><use href="#eye"/></svg></button><i class="vline"></i>
    <div class="modes"><button class="on" aria-label="页面视图"><svg class="i16"><use href="#doc"/></svg></button><button aria-label="大纲"><svg class="i16"><use href="#list"/></svg></button><button aria-label="阅读版式"><svg class="i16"><use href="#book"/></svg></button><button aria-label="Web版式"><svg class="i16"><use href="#globe"/></svg></button><button aria-label="写作模式"><svg class="i16"><use href="#write"/></svg></button></div>
    <i class="vline"></i>
    <button class="fit" aria-label="最佳显示"><svg class="i16"><use href="#fit"/></svg></button>
    <button class="pct">100%<i class="tri"></i></button>
    <button class="zb" aria-label="缩小"><svg class="i10" viewBox="0 0 10 10"><path d="M0 5h10" stroke-width="2"/></svg></button>
    <input class="zoom" type="range" min="0" max="100" value="50" aria-label="缩放">
    <button class="zb" aria-label="放大"><svg class="i10" viewBox="0 0 10 10"><path d="M0 5h10M5 0v10" stroke-width="2"/></svg></button>
    <button class="fullb" aria-label="全屏"><svg class="i16"><use href="#full"/></svg></button>
  </div>
</footer>

<div class="activate"><span>激活</span><small>转到“</small></div>
<div class="site">
  <svg viewBox="0 0 46 42"><path d="M44 1C26 0 4 10 1 24 0 32 8 36 16 36c12 0 16-10 11-15-4-3-9-1-11 3 4-2 8 0 6 4-3 4-13 2-13-4C9 14 26 4 44 1z" fill="url(#lb)" stroke="none"/><path d="M20 20c6-7 18-7 21-2 2 8-13 20-38 22 17-4 31-13 30-19-1-4-8-4-13-1z" fill="url(#lg)" stroke="none"/></svg>
  <div><b>极光下载站</b><em>www.xz7.com</em></div>
</div>
</body>
</html>
```
FILE: styles.css
```css
* { box-sizing: border-box; }
html, body { height: 100%; }
body {
  margin: 0;
  display: flex;
  flex-direction: column;
  position: relative;
  overflow: hidden;
  background: #f6f7f9;
  color: #262d3d;
  font: 12px/19px "Noto Sans", "Noto Sans CJK SC", sans-serif;
}
button, input, select {
  font: inherit;
  color: inherit;
  background: none;
  border: 0;
  padding: 0;
  margin: 0;
  outline: 0;
}
button { white-space: nowrap; display: flex; align-items: center; justify-content: center; flex: none; }
svg { fill: none; stroke: currentColor; flex: none; display: block; }
i { flex: none; }
.sprite { position: absolute; width: 0; height: 0; }
.i10 { width: 10px; height: 10px; }
.i12 { width: 12px; height: 12px; }
.i16 { width: 16px; height: 16px; }
.i24 { width: 24px; height: 16px; }
.i24s { width: 24px; height: 24px; }
.tri { border: 3px solid transparent; border-top-color: #6b7a99; border-bottom: 0; display: block; }
.tri.up { border-top: 0; border-bottom: 3px solid #7c8bab; }
.vline { width: 1px; height: 20px; background: #d9dce2; }

/* window tabs */
.tabbar { height: 40px; flex: none; display: flex; align-items: flex-end; gap: 3px; padding-left: 3px; background: #e1e3e7; color: #4a5163; }
.tab { height: 30px; border-radius: 3px 3px 0 0; background: #d8d9dd; }
.home { width: 69px; background: #6190fb; color: #fff; }
.store { width: 125px; justify-content: flex-start; padding-left: 11px; gap: 3px; }
.file { width: 250px; padding: 0 13px 0 10px; gap: 4px; }
.file .name { flex: 1; text-align: left; }
.file.current { background: #fff; color: #1c2230; }
.dot { width: 6px; height: 6px; border-radius: 50%; background: #bcc4d6; }
.current .dot { background: #e39a0c; }
.faint { color: #bcc4d6; margin-right: 16px; }
.newtab { width: 30px; height: 30px; color: #4a5672; }
.winctl { margin-left: auto; height: 40px; display: flex; align-items: center; gap: 12px; padding-right: 7px; color: #46506a; }
.login { height: 24px; border-radius: 12px; padding: 0 2px 0 6px; gap: 4px; background: #f5a50a; color: #fff; }
.avatar { width: 20px; height: 20px; stroke: none; }
.winctl .vline { margin: 0 0 0 -4px; background: #c6c9d0; }
.winctl .i12 { margin-right: 4px; }
.winctl button:last-child .i12 { margin-right: 0; }

/* menu bar */
.menubar { height: 38px; flex: none; display: flex; align-items: center; padding-left: 15px; background: #fff; }
.filemenu { gap: 5px; padding-right: 5px; border-right: 1px solid #e0e2e7; height: 24px; }
.grey { color: #8a8f9a; }
.quick { display: flex; gap: 9px; padding: 0 8px; height: 24px; border-right: 1px solid #e0e2e7; }
.quick button { gap: 4px; }
.quick .off { color: #b3b7bf; }
.quick .i10 { margin: 0 0 0 3px; }
.nav { display: flex; align-items: center; gap: 26px; padding-left: 16px; }
.nav.extra { gap: 29px; padding: 0 18px 0 29px; border-right: 1px solid #e0e2e7; height: 20px; }
.nav.tools { gap: 19px; padding-left: 10px; }
.pill { height: 20px; padding: 0 13px; border-radius: 10px; background: #4a90f2; color: #fff; font-weight: 700; }
.blue { color: #4a8ff0; }
.search { display: flex; align-items: center; padding-left: 30px; color: #7c8496; flex: 1; min-width: 0; }
.search input { width: 130px; min-width: 0; }
.search input::placeholder { color: #7c8496; opacity: 1; }
.account { display: flex; align-items: center; gap: 10px; padding-right: 14px; }
.account button { gap: 4px; }
.account .i16 { color: #5f687c; }
.account .vline { margin-right: -2px; }

/* ribbon */
.ribbon { height: 64px; flex: none; display: flex; padding: 1px 0 2px; background: #fff; position: relative; box-shadow: 0 1px 4px #00000024; }
.groups { flex: 1; min-width: 0; overflow: hidden; display: flex; padding-left: 8px; }
.group { display: flex; position: relative; flex: none; gap: 11px; border-right: 1px solid #e3e5e9; }
.g1 { padding-right: 5px; }
.g2 { padding: 0 8px 0 10px; }
.g3 { padding: 0 9px 0 10px; gap: 10px; }
.g5 { padding: 0 6px 0 2px; }
.g6 { padding: 0 12px 0 5px; gap: 16px; }
.g7 { padding-left: 10px; gap: 7px; border: 0; }
.stack { display: flex; flex-direction: column; gap: 2px; padding-top: 1px; }
.stack button { height: 24px; gap: 4px; justify-content: flex-start; }
.g1 .stack button { padding: 0 4px; }
.on { background: #dbe0e6; border-radius: 2px; }
.big { flex-direction: column; justify-content: flex-start; padding-top: 4px; gap: 3px; }
.big span { display: flex; align-items: center; gap: 2px; }
.corner { position: absolute; right: 5px; bottom: 2px; width: 5px; height: 5px; border: solid #8b93a5; border-width: 0 1px 1px 0; }
.sizes { display: flex; flex-direction: column; gap: 2px; padding-top: 1px; }
.size { display: flex; align-items: center; gap: 5px; }
.size label { width: 28px; }
.spin { display: flex; width: 108px; height: 23px; border: 1px solid #d5d7dd; border-radius: 2px; }
.spin button { width: 22px; color: #6f7480; }
.spin input { flex: 1; min-width: 0; padding-left: 4px; border: solid #d5d7dd; border-width: 0 1px; }
.font { display: flex; flex-direction: column; gap: 3px; padding: 1px 4px 0 0; width: 174px; }
.combos { display: flex; height: 24px; border: 1px solid #e0e2e7; border-radius: 2px; }
.combo { flex: 1; display: flex; align-items: center; padding-right: 3px; }
.combo.wide { flex: none; width: 91px; border-right: 1px solid #e0e2e7; }
.combo select { appearance: none; flex: 1; min-width: 0; height: 100%; }
.fmt { display: flex; align-items: center; height: 24px; }
.fmt button { width: 25px; height: 24px; }
.fmt .dd { width: 34px; gap: 3px; }
.scrollbtn { width: 13px; background: #c9cbd1; }

/* workspace */
.main { flex: 1; min-height: 0; display: flex; padding-top: 1px; }
.canvas { flex: 1; min-width: 0; overflow: hidden; padding-top: 18px; display: flex; justify-content: center; }
.page { flex: none; width: 794px; position: relative; background: #fff; padding: 96px 112px 0; box-shadow: 0 0 16px #0000003a; height: 100%; }
.doc { width: 570px; table-layout: fixed; border-collapse: collapse; background: #c6c6c6; color: #000; font: 14px/18px "Noto Sans", "Noto Sans CJK SC", sans-serif; }
.doc td { border: 1px solid #000; padding: 0 7px; height: 22px; white-space: nowrap; vertical-align: top; }
.ret { width: 8px; height: 8px; display: inline-block; color: #666; }
.typo { text-decoration: underline wavy #c33 1px; text-underline-offset: 1px; }
.after { margin: 1px 0 0 7px; line-height: 20px; }
.crop { position: absolute; top: 73px; width: 1px; height: 24px; background: #c4c4c4; }
.cl { left: 120px; }
.cr { left: 673px; }
.rowends { position: absolute; left: 683px; top: 97px; width: 7px; height: 60px; background: #c6c6c6; display: flex; flex-direction: column; justify-content: space-between; padding: 5px 0 4px; }
.handle { position: absolute; background: #fff; border: 1px solid #c4c4c4; border-radius: 2px; color: #555; }
.move { left: 92px; top: 75px; width: 21px; height: 21px; }
.addcol { left: 683px; top: 109px; width: 18px; height: 37px; border-color: #8c8c8c; border-radius: 3px; background: #f8f8f8; }
.resize { left: 681px; top: 160px; width: 21px; height: 21px; }

.mini { position: absolute; left: 249px; top: 56px; width: 385px; height: 55px; display: flex; padding: 1px; background: #fff; border: 1px solid #d3d6dc; box-shadow: 1px 2px 4px #00000040; }
.minileft { width: 287px; border-right: 1px solid #e3e5e9; display: flex; flex-direction: column; gap: 2px; }
.mini .combos { width: 196px; margin-right: 3px; }
.mini .combo.wide { width: 116px; }
.mini .fmt { height: 25px; }
.miniright { display: flex; gap: 13px; padding-left: 9px; }
.miniright .big { padding-top: 2px; gap: 4px; }

.ctx { position: absolute; left: 245px; top: 128px; width: 255px; background: #fff; border: 1px solid #d9dce6; box-shadow: 0 1px 3px #00000026; }
.ctx button { width: 100%; height: 28px; padding: 0 17px 0 8px; gap: 9px; justify-content: flex-start; }
.ctx .plain { height: 27px; padding-left: 33px; }
.ctx kbd { font: inherit; font-size: 13px; margin-left: auto; color: #7b7f88; }
.ctx hr { height: 1px; margin: 4px 0; border: 0; background: #dfe2e9; }
.ctx .hover { background: #e8eaef; }
.ctx .sub { padding-right: 8px; }
.ctx .sub::after { content: ""; margin-left: auto; border: 3px solid transparent; border-left-color: #6b7a99; border-right: 0; }
.fade { color: #8b8f99; }

.aligns { position: absolute; left: 499px; top: 481px; width: 95px; display: grid; grid-template-columns: repeat(3, 28px); padding: 3px 3px 5px; background: #fff; border: 1px solid #d9dce6; border-radius: 2px; box-shadow: 0 1px 2px #0000001a; }
.aligns button { height: 28px; }
.aligns svg { width: 24px; height: 22px; stroke: #3f83f8; stroke-width: 1.5; }
.aligns .b { stroke: #3a4660; stroke-width: 1.5; }
.aligns .on { background: none; }
.aligns .on .b { fill: #d9dee4; }
.aligns .pick .b { fill: #e4e8ee; }
.arrows { position: absolute; left: 396px; top: 399px; width: 330px; height: 200px; filter: drop-shadow(2px 3px 2px #00000080); pointer-events: none; }

.vscroll { width: 14px; flex: none; display: flex; flex-direction: column; color: #8b97b3; }
.ruler { height: 17px; display: flex; justify-content: center; align-items: center; }
.track { flex: 1; display: flex; flex-direction: column; align-items: center; background: #e9eaf0; padding: 8px 0 6px; }
.thumb { width: 12px; height: 493px; margin: 10px 0 auto; border-radius: 6px; background: #d3d6df; }
.track .i10 { margin-top: 9px; }

.panel { width: 262px; flex: none; border: solid #e0e3ea; border-width: 0 1px; }
.phead { height: 28px; display: flex; align-items: center; gap: 8px; padding: 0 7px 0 9px; color: #4a5163; }
.ptitle { gap: 4px; margin-right: auto; }
.ptabs { display: flex; height: 38px; margin: 0 12px; border-bottom: 1px solid #e0e3ea; color: #4a5163; }
.ptabs button { width: 72px; height: 36px; padding-top: 5px; border-bottom: 2px solid transparent; }
.ptabs .sel { color: #4a8ff0; border-color: #4a8ff0; }
.ptabs .pm { width: 20px; color: #262d3d; }
.plist { padding: 4px 0 0 19px; }
.plist button { height: 42px; gap: 8px; }
.plist button::before { content: ""; border: 3px solid transparent; border-left: 4px solid #3a4358; border-right: 0; }

.side { width: 43px; flex: none; display: flex; flex-direction: column; align-items: center; gap: 4px; padding: 9px 2px 2px 0; }
.grip { width: 20px; height: 4px; border: solid #c3c7cf; border-width: 1px 0; margin-bottom: 10px; }
.side button { width: 32px; height: 32px; }
.side .last { margin-top: auto; height: 42px; width: 38px; border-top: 1px solid #dfe2e9; }

/* status bar */
.status { height: 29px; flex: none; display: flex; align-items: center; border-top: 1px solid #dfe2e9; padding-left: 10px; }
.status .vline { height: 14px; }
.cell { padding-right: 7px; }
.vline + .cell { padding-left: 9px; }
.spell { height: 24px; background: #e8f1fc; padding: 0 3px; gap: 3px; }
.status .gap { margin: 0 9px 0 5px; }
.proof { gap: 3px; padding-right: 9px; }
.views { margin-left: auto; display: flex; align-items: center; padding-right: 15px; }
.views .vline { margin: 0 11px 0 13px; }
.modes { display: flex; gap: 2px; }
.modes button { width: 24px; height: 24px; }
.modes + .vline { margin: 0 13px 0 11px; }
.pct { gap: 5px; padding: 0 13px 0 7px; }
.zoom { appearance: none; width: 138px; height: 14px; margin: 0 12px 0 12px; background: linear-gradient(90deg, #3f4a63 50%, #c9ced8 50%) center / 100% 1px no-repeat; }
.zoom::-webkit-slider-thumb { appearance: none; width: 12px; height: 12px; border-radius: 50%; background: #f5f7fa; border: 1px solid #333; }
.fullb { margin-left: 12px; }

/* overlays in the lower right corner */
.activate { position: absolute; right: 0; bottom: 12px; width: 34px; overflow: hidden; white-space: nowrap; color: #9b9fa6; opacity: .8; pointer-events: none; }
.activate span, .activate small { display: block; font-size: 20px; line-height: 24px; }
.activate small { font-size: 15px; }
.site { position: absolute; right: 11px; bottom: 7px; display: flex; gap: 0; pointer-events: none; opacity: .85; }
.site svg { width: 44px; height: 42px; }
.site b, .site em { display: block; font-style: normal; white-space: nowrap; }
.site b { font-size: 21px; line-height: 24px; color: #3e8ad4; }
.site em { font: 700 16px/20px "Liberation Sans", sans-serif; color: #3db56a; }
```
